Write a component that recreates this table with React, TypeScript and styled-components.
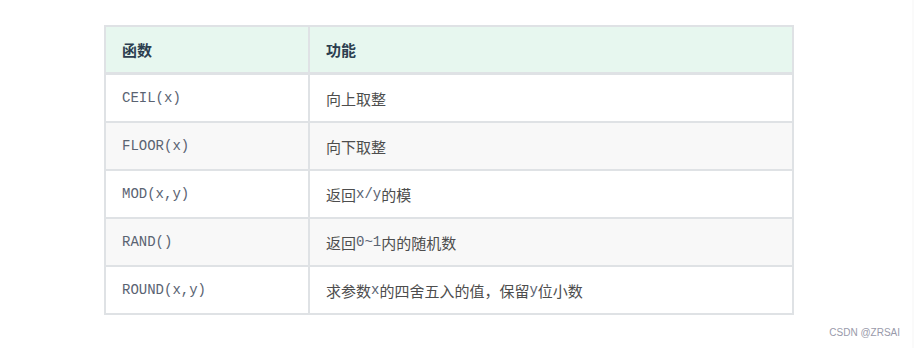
import React from "react";
import styled, { createGlobalStyle } from "styled-components";

const GlobalStyle = createGlobalStyle`
  html, body {
    margin: 0;
    padding: 0;
    background: #ffffff;
  }
  body {
    font-family: "Noto Sans CJK SC", "Liberation Sans", sans-serif;
  }
`;

const Page = styled.div`
  display: flex;
  width: 914px;
  height: 348px;
  overflow: hidden;
`;

const Main = styled.div`
  flex: 1;
  display: flex;
  flex-direction: column;
  padding: 25px 0 0 104px;
`;

const Edge = styled.div`
  width: 2px;
  background: #fafafa;
`;

const Table = styled.div`
  display: grid;
  grid-template-columns: 202px 482px;
  grid-auto-rows: 46px;
  gap: 2px;
  padding: 2px;
  width: max-content;
  background: #dfe2e5;
`;

const Cell = styled.div<{ $head?: boolean; $alt?: boolean }>`
  display: flex;
  align-items: center;
  padding: 0 16px;
  height: ${(p) => (p.$head ? "45px" : "46px")};
  background: ${(p) => (p.$head ? "#e7f7ef" : p.$alt ? "#f8f8f8" : "#ffffff")};
  color: ${(p) => (p.$head ? "#2c3e50" : "#4d4d4d")};
  font-size: 15px;
  font-weight: ${(p) => (p.$head ? 700 : 400)};
  white-space: nowrap;
`;

const Code = styled.span`
  font-family: "Liberation Mono", monospace;
  font-size: 14px;
  color: #5a6372;
`;

const Footer = styled.div`
  display: flex;
  justify-content: flex-end;
  padding: 12px 12px 0 0;
  font-family: "Liberation Sans", sans-serif;
  font-size: 10px;
  color: #999aaa;
`;

type Row = { fn: string; desc: React.ReactNode };

const rows: Row[] = [
  { fn: "CEIL(x)", desc: "向上取整" },
  { fn: "FLOOR(x)", desc: "向下取整" },
  {
    fn: "MOD(x,y)",
    desc: (
      <>
        返回<Code>x/y</Code>的模
      </>
    ),
  },
  {
    fn: "RAND()",
    desc: (
      <>
        返回<Code>0~1</Code>内的随机数
      </>
    ),
  },
  {
    fn: "ROUND(x,y)",
    desc: (
      <>
        求参数<Code>x</Code>的四舍五入的值，保留<Code>y</Code>位小数
      </>
    ),
  },
];

export default function App() {
  return (
    <Page>
      <GlobalStyle />
      <Main>
        <Table>
          <Cell $head>函数</Cell>
          <Cell $head>功能</Cell>
          {rows.map((r, i) => (
            <React.Fragment key={r.fn}>
              <Cell $alt={i % 2 === 1}>
                <Code>{r.fn}</Code>
              </Cell>
              <Cell $alt={i % 2 === 1}>{r.desc}</Cell>
            </React.Fragment>
          ))}
        </Table>
        <Footer>CSDN @ZRSAI</Footer>
      </Main>
      <Edge />
    </Page>
  );
}
